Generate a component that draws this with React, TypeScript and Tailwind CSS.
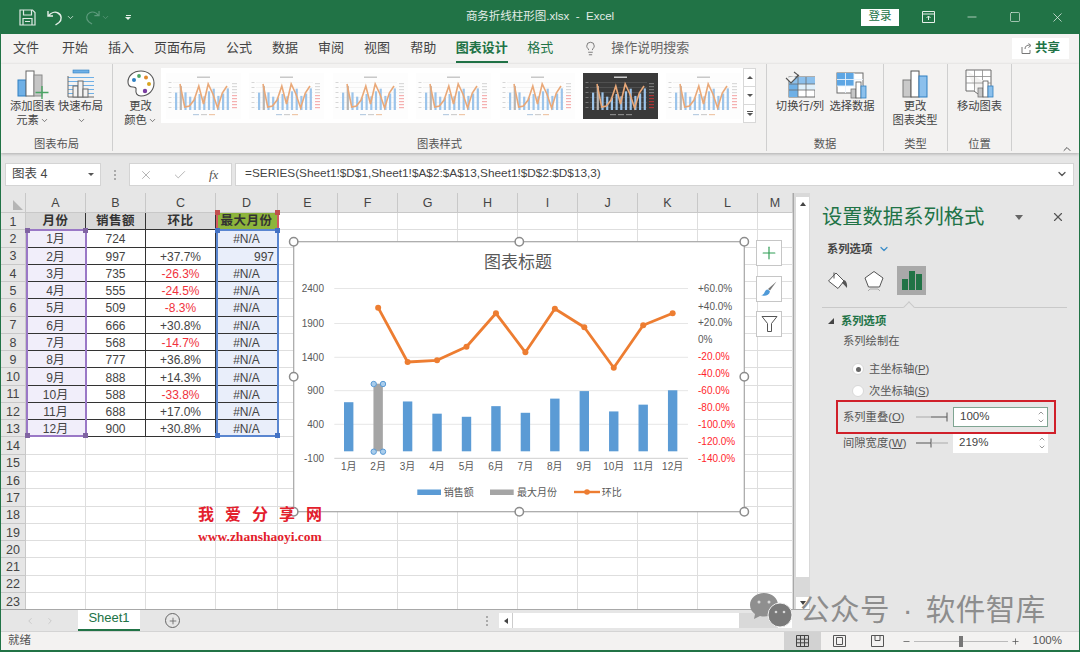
import React from 'react';
import { X, Minus, Square, Plus, ChevronDown, ChevronUp, Lightbulb, Check, ChevronLeft, ChevronRight } from 'lucide-react';

const tabs = ['开始', '插入', '页面布局', '公式', '数据', '审阅', '视图', '帮助'];
const columns = ['A', 'B', 'C', 'D', 'E', 'F', 'G', 'H', 'I', 'J', 'K', 'L', 'M'];

const sales = [724, 997, 735, 555, 509, 666, 568, 777, 888, 588, 688, 900];
const ratio = ['', '+37.7%', '-26.3%', '-24.5%', '-8.3%', '+30.8%', '-14.7%', '+36.8%', '+14.3%', '-33.8%', '+17.0%', '+30.8%'];
const months = ['1月', '2月', '3月', '4月', '5月', '6月', '7月', '8月', '9月', '10月', '11月', '12月'];
const lineY = [77.7, 132, 130.3, 116.7, 83.3, 122.3, 78.7, 97.3, 137.7, 95.3, 83.3];

const SaveIcon = () => (
  <svg width="17" height="17" viewBox="0 0 17 17" fill="none" stroke="#dfeae4" strokeWidth="1.2">
    <path d="M1 1h12.5L16 3.5V16H1z" />
    <path d="M4.5 1v5h8V1M4 16v-6.5h9V16M6 12.5h5" />
  </svg>
);

const UndoIcon = ({ color }: { color: string }) => (
  <svg width="17" height="17" viewBox="0 0 17 17" fill="none" stroke={color} strokeWidth="1.4">
    <path d="M1 2v5h5M1.5 7C4 3.5 8 2.5 11 4c4 2 4 7 1 9.5L8.5 16" />
  </svg>
);

const RedoIcon = () => (
  <svg width="16" height="16" viewBox="0 0 17 17" fill="none" stroke="#5d9a7c" strokeWidth="1.3">
    <path d="M16 2v5h-5M15.5 7C13 3.5 9 2.5 6 4c-4 2-4 7-1 9.5L8.5 16" />
  </svg>
);

const AddChartIcon = () => (
  <svg width="36" height="30" viewBox="0 0 36 30">
    <rect x="3" y="11" width="8" height="16" fill="#6fb0e6" stroke="#2f7fc1" />
    <rect x="11" y="2" width="8" height="25" fill="#fff" stroke="#666" />
    <rect x="19" y="6" width="8" height="21" fill="#c6c6c6" stroke="#8a8a8a" />
    <path d="M27 17v13M20.5 23.5h13" stroke="#4aa564" strokeWidth="1.4" />
  </svg>
);

const QuickLayoutIcon = () => (
  <svg width="28" height="30" viewBox="0 0 28 30" fill="none">
    <rect x="6" y="1" width="16" height="3" fill="#6fb0e6" stroke="#2f7fc1" strokeWidth="0.6" />
    <path d="M1 8.5h26M1 12.5h26M1 16.5h26M1 20.5h26M1 24.5h26" stroke="#6fb0e6" />
    <path d="M1 7v21h26" stroke="#6b6b6b" />
    <rect x="6" y="17" width="5" height="11" fill="#f3f2f1" stroke="#6b6b6b" />
    <rect x="11" y="12" width="5" height="16" fill="#f3f2f1" stroke="#6b6b6b" />
    <rect x="16" y="20" width="5" height="8" fill="#f3f2f1" stroke="#6b6b6b" />
  </svg>
);

const PaletteIcon = () => (
  <svg width="28" height="30" viewBox="0 0 28 30" fill="#fff">
    <path d="M14 2C6 2 1 7 1 13c0 4 3 5 5 5 2.5 0 3.5 1 3 3-.6 3 1 6 5 6 8 0 13-6 13-13S21 2 14 2z" stroke="#555" strokeWidth="1.1" />
    <circle cx="7" cy="11" r="2" fill="#2f7fc1" />
    <circle cx="12" cy="7" r="1.9" fill="#4aa564" />
    <circle cx="19" cy="8.5" r="2" fill="#e08a2c" />
    <circle cx="22" cy="15" r="2" fill="#d9a520" />
    <circle cx="18" cy="22" r="2.2" fill="#7a3fa0" />
  </svg>
);

const SwitchIcon = () => (
  <svg width="30" height="30" viewBox="0 0 30 30" fill="none">
    <rect x="4" y="8" width="26" height="20" fill="#fff" stroke="#6b6b6b" />
    <rect x="4" y="8" width="26" height="7" fill="#8cc0ec" />
    <rect x="13" y="15" width="17" height="6" fill="#dff0fb" />
    <rect x="4" y="15" width="9" height="13" fill="#6fb0e6" />
    <path d="M13 8v20M21 8v20M4 15h26M4 21h26" stroke="#6b6b6b" strokeWidth="0.8" />
    <path d="M1 9l5 5 8-8M9 3l4 3-3 4" stroke="#555" strokeWidth="1.1" fill="#f3f2f1" />
  </svg>
);

const SelectDataIcon = () => (
  <svg width="32" height="30" viewBox="0 0 32 30" fill="none">
    <rect x="1" y="4" width="26" height="20" fill="#fff" stroke="#6b6b6b" />
    <rect x="1" y="4" width="17" height="13" fill="#5da6e4" />
    <path d="M9.5 4v20M18 4v20M1 10.5h26M1 17h26" stroke="#e9f2fa" strokeWidth="0.9" />
    <rect x="15" y="20" width="5" height="9" fill="#c6c6c6" stroke="#777" strokeWidth="0.8" />
    <rect x="20" y="13" width="5" height="16" fill="#fff" stroke="#555" strokeWidth="0.8" />
    <rect x="25" y="17" width="5" height="12" fill="#8cc0ec" stroke="#2f7fc1" strokeWidth="0.8" />
  </svg>
);

const ChangeTypeIcon = () => (
  <svg width="26" height="30" viewBox="0 0 26 30">
    <rect x="1" y="11" width="8" height="17" fill="#c9c9c9" stroke="#7a7a7a" />
    <rect x="9" y="2" width="8" height="26" fill="#fff" stroke="#555" />
    <rect x="17" y="7" width="8" height="21" fill="#8cc0ec" stroke="#2f7fc1" />
  </svg>
);

const MoveChartIcon = () => (
  <svg width="30" height="30" viewBox="0 0 30 30" fill="none">
    <path d="M1 1h25v17M1 1v21h8l4 3" stroke="#6b6b6b" fill="#fff" />
    <path d="M9.5 1v21M17.5 1v10M1 7.5h25M1 14h25" stroke="#8a8a8a" strokeWidth="0.8" />
    <rect x="13" y="19" width="5" height="9" fill="#c6c6c6" stroke="#777" strokeWidth="0.8" />
    <rect x="18" y="12" width="5" height="16" fill="#fff" stroke="#555" strokeWidth="0.8" />
    <rect x="23" y="17" width="5" height="11" fill="#8cc0ec" stroke="#2f7fc1" strokeWidth="0.8" />
  </svg>
);

const MiniChart = ({ dark }: { dark?: boolean }) => {
  const pts = [11, 34, 33, 27, 13, 31, 11, 21, 35, 20, 13];
  const ticks = [10, 13, 16, 19, 22, 25, 28, 31, 34];
  return (
    <svg width="75" height="46" viewBox="0 0 75 46" className="shrink-0">
      <rect width="75" height="46" fill={dark ? '#3a3a3a' : '#fdfdfd'} />
      <rect x="31" y="3.5" width="13" height="1.5" fill={dark ? '#ccc' : '#c8c8c8'} />
      {[9, 14, 19, 24, 29, 34].map((y) => (
        <rect key={y} x="7" y={y} width="57" height="0.5" fill={dark ? '#666' : '#e8e8e8'} />
      ))}
      {[9, 14, 19, 24, 29, 34].map((y) => (
        <rect key={y} x="2.5" y={y} width="3" height="1" fill={dark ? '#777' : '#d6d6d6'} />
      ))}
      {sales.map((v, i) => (
        <rect key={i} x={9 + i * 4.7} y={37 - v * 0.024} width="2.2" height={v * 0.024} fill={i === 1 ? '#b5b5b5' : '#9cc4ea'} />
      ))}
      <polyline
        points={pts.map((y, i) => `${14 + i * 4.7},${y}`).join(' ')}
        fill="none"
        stroke="#e9a878"
        strokeWidth="1.6"
      />
      {ticks.map((y, i) => (
        <rect key={y} x="66" y={y} width="5" height="1.2" fill={i > 3 ? (dark ? '#a33' : '#f5b0b0') : dark ? '#777' : '#dadada'} />
      ))}
      <rect x="27" y="41" width="6" height="1.2" fill={dark ? '#888' : '#b8cde2'} />
      <rect x="35" y="41" width="6" height="1.2" fill={dark ? '#888' : '#cfcfcf'} />
      <rect x="43" y="41" width="6" height="1.2" fill={dark ? '#888' : '#efc7a8'} />
    </svg>
  );
};

const RibbonBtn = ({ icon, lines, width, arrow }: { icon: React.ReactNode; lines: string[]; width: string; arrow?: boolean }) => (
  <div className={`flex flex-col items-center pt-[5px] text-[11.3px] leading-[14px] text-[#444] ${width}`}>
    <div className="flex h-[30px] items-end justify-center">{icon}</div>
    {lines.map((l, i) => (
      <div key={i} className="flex h-[14px] items-center whitespace-nowrap">
        {l}
        {arrow && i === lines.length - 1 && <ChevronDown size={9} className="ml-[1px] text-[#555]" />}
      </div>
    ))}
  </div>
);

const RibbonGroup = ({ label, width, children }: { label: string; width: string; children: React.ReactNode }) => (
  <div className={`flex h-[87px] shrink-0 flex-col border-r border-[#cfcfcf] ${width}`}>
    <div className="flex flex-1">{children}</div>
    <div className="text-center text-[11.3px] leading-[14px] text-[#555]">{label}</div>
  </div>
);

const ColHeader = ({ name }: { name: string }) => (
  <div className="flex items-center justify-center border-r border-b border-[#c8c8c8] bg-[#e6e6e6] pt-[2px] text-[12.5px] text-[#444]">{name}</div>
);

const RowHeader = ({ n }: { n: number }) => (
  <div className="flex items-center justify-center border-r border-b border-[#c8c8c8] bg-[#e6e6e6] pt-[2px] text-[12.5px] text-[#444]">{n}</div>
);

const Blank = () => <div className="border-r border-b border-[#dedede] bg-white" />;

const dataCell = 'flex items-center justify-center border-r border-b border-[#333] pt-[2px] text-[12px] text-[#444] whitespace-nowrap';
const headCell = 'flex items-center justify-center border-r border-b border-[#333] pt-[1px] text-[12.5px] font-bold tracking-[0.5px] text-[#333]';

// little squares on the corners of a highlighted range
const RangeBox = ({ box, border, dot }: { box: string; border: string; dot: string }) => (
  <div className={`pointer-events-none absolute border-2 ${box} ${border}`}>
    <div className={`absolute top-[-3px] left-[-3px] h-[5px] w-[5px] ${dot}`} />
    <div className={`absolute top-[-3px] right-[-3px] h-[5px] w-[5px] ${dot}`} />
    <div className={`absolute bottom-[-3px] left-[-3px] h-[5px] w-[5px] ${dot}`} />
    <div className={`absolute right-[-3px] bottom-[-3px] h-[5px] w-[5px] ${dot}`} />
  </div>
);

const Sheet = () => (
  <div className="relative h-[416px] w-[792px] shrink-0 overflow-hidden bg-white">
    <div className="grid grid-cols-[25px_60px_60px_70px_62px_60px_60px_60px_60px_60px_60px_60px_60px_35px] grid-rows-[20px] auto-rows-[17.28px]">
      <div className="relative border-r border-b border-[#c8c8c8] bg-[#e6e6e6]">
        <div className="absolute right-[2px] bottom-[2px] h-0 w-0 border-t-[10px] border-l-[10px] border-t-transparent border-l-[#b5b5b5]" />
      </div>
      {columns.map((c) => (
        <ColHeader key={c} name={c} />
      ))}

      <RowHeader n={1} />
      <div className={`${headCell} bg-[#d9d9d9]`}>月份</div>
      <div className={`${headCell} bg-[#d9d9d9]`}>销售额</div>
      <div className={`${headCell} bg-[#d9d9d9]`}>环比</div>
      <div className={`${headCell} bg-[#8db53c]`}>最大月份</div>
      {columns.slice(4).map((c) => (
        <Blank key={c} />
      ))}

      {months.map((m, i) => (
        <React.Fragment key={m}>
          <RowHeader n={i + 2} />
          <div className={`${dataCell} bg-[#f1eefa]`}>{m}</div>
          <div className={dataCell}>{sales[i]}</div>
          <div className={`${dataCell} ${ratio[i].startsWith('-') ? 'text-[#f0323c]' : ''}`}>{ratio[i]}</div>
          {i === 1 ? (
            <div className={`${dataCell} justify-end bg-[#e9eefa] pr-[3px]`}>997</div>
          ) : (
            <div className={`${dataCell} bg-[#e9eefa]`}>#N/A</div>
          )}
          {columns.slice(4).map((c) => (
            <Blank key={c} />
          ))}
        </React.Fragment>
      ))}

      {Array.from({ length: 10 }, (_, i) => (
        <React.Fragment key={i}>
          <RowHeader n={i + 14} />
          {columns.map((c) => (
            <Blank key={c} />
          ))}
        </React.Fragment>
      ))}
    </div>

    {/* range highlights over the cells */}
    <RangeBox box="top-[20px] left-[215px] h-[17px] w-[63px] border-y-0" border="border-[#d2595f]" dot="bg-[#c0504d]" />
    <RangeBox box="top-[36px] left-[25px] h-[208px] w-[61px]" border="border-[#9a78c6]" dot="bg-[#8064a2]" />
    <RangeBox box="top-[36px] left-[215px] h-[208px] w-[63px]" border="border-[#5a86d0]" dot="bg-[#4472c4]" />
  </div>
);

const VScrollBar = () => (
  <div className="flex h-[416px] w-[17px] shrink-0 flex-col border-l border-[#a8a8a8] bg-[#d9d9d9] pr-[1px] pl-[2px]">
    <div className="mt-[4px] flex h-[14px] items-center justify-center bg-white">
      <div className="h-0 w-0 border-x-[3px] border-b-[4px] border-x-transparent border-b-[#444]" />
    </div>
    <div className="h-[366px] bg-white" />
    <div className="mt-[20px] flex h-[12px] items-center justify-center bg-white">
      <div className="h-0 w-0 border-x-[3px] border-t-[4px] border-x-transparent border-t-[#444]" />
    </div>
  </div>
);

const Chart = () => {
  const handles = [
    [8.7, 11.7],
    [234.3, 11.7],
    [459.3, 11.7],
    [8.7, 146.7],
    [459.3, 146.7],
    [8.7, 281.7],
    [234.3, 281.7],
    [459.3, 281.7],
  ];
  const right = ['+60.0%', '+40.0%', '+20.0%', '0%', '-20.0%', '-40.0%', '-60.0%', '-80.0%', '-100.0%', '-120.0%', '-140.0%'];
  const rightY = [58.5, 76, 92.5, 109.7, 126.5, 143.3, 160, 177.3, 194.3, 211.3, 228.3];
  const gridY = [58.5, 93.5, 127.3, 160.7, 194.3, 228.3];
  const left = ['2400', '1900', '1400', '900', '400', '-100'];
  const cx = (i: number) => 63.7 + i * 29.45;
  return (
    <svg width="500" height="290" viewBox="0 0 500 290" className="absolute top-[37px] left-[284px] font-['Liberation_Sans','Noto_Sans_CJK_SC',sans-serif]">
      <rect x="8.7" y="11.7" width="450.6" height="270" fill="#fff" stroke="#a6a6a6" strokeWidth="1.2" />
      <text x="233" y="38" textAnchor="middle" fontSize="17" fill="#595959">图表标题</text>
      {gridY.map((y, i) => (
        <g key={y}>
          <line x1="49.3" x2="403" y1={y} y2={y} stroke={i === 5 ? '#cfcfcf' : '#e6e6e6'} />
          <text x="39" y={y + 3.5} textAnchor="end" fontSize="10" fill="#595959">{left[i]}</text>
        </g>
      ))}
      {right.map((t, i) => (
        <text key={t} x="413" y={rightY[i] + 3.5} fontSize="10" fill={i > 3 ? '#ff1f2d' : '#595959'}>{t}</text>
      ))}
      {sales.map((v, i) => (
        <rect key={i} x={cx(i) - 4.7} y={221.3 - v * 0.0678} width="9.4" height={v * 0.0678} fill={i === 1 ? '#a5a5a5' : '#5b9bd5'} />
      ))}
      {months.map((m, i) => (
        <text key={m} x={cx(i)} y="240" textAnchor="middle" fontSize="10" fill="#595959">{m}</text>
      ))}
      {[[88.7, 154], [98, 154], [88.7, 221.7], [98, 221.7]].map(([x, y]) => (
        <circle key={`${x}-${y}`} cx={x} cy={y} r="2.7" fill="#a9cdec" stroke="#5b9bd5" />
      ))}
      <polyline
        points={lineY.map((y, i) => `${cx(i + 1)},${y}`).join(' ')}
        fill="none"
        stroke="#ed7d31"
        strokeWidth="2.8"
        strokeLinejoin="round"
      />
      {lineY.map((y, i) => (
        <circle key={i} cx={cx(i + 1)} cy={y} r="3" fill="#ed7d31" />
      ))}
      <rect x="132.3" y="259.5" width="23.7" height="5.5" fill="#5b9bd5" />
      <text x="158.7" y="266" fontSize="10" fill="#595959">销售额</text>
      <rect x="205" y="259.5" width="23.7" height="5.5" fill="#a5a5a5" />
      <text x="232" y="266" fontSize="10" fill="#595959">最大月份</text>
      <line x1="289" x2="315" y1="262" y2="262" stroke="#ed7d31" strokeWidth="2.4" />
      <circle cx="302" cy="262" r="2.8" fill="#ed7d31" />
      <text x="316.7" y="266" fontSize="10" fill="#595959">环比</text>
      {handles.map(([x, y]) => (
        <circle key={`${x}-${y}`} cx={x} cy={y} r="4.2" fill="#fff" stroke="#8c8c8c" strokeWidth="1.5" />
      ))}
    </svg>
  );
};

const ChartSideButton = ({ top, children }: { top: string; children: React.ReactNode }) => (
  <div className={`absolute left-[755px] flex h-[26px] w-[26px] items-center justify-center border border-[#c6c6c6] bg-white ${top}`}>{children}</div>
);

const SpinBox = ({ value, active }: { value: string; active?: boolean }) => (
  <div className={`flex h-[20px] w-[95px] items-center justify-between pr-[2px] pl-[6px] text-[11.5px] text-[#444] ${active ? 'border border-[#7fa592] bg-white' : 'bg-white'}`}>
    {value}
    <div className="flex flex-col text-[#666]">
      <ChevronUp size={8} />
      <ChevronDown size={8} />
    </div>
  </div>
);

const Radio = ({ label, checked }: { label: React.ReactNode; checked?: boolean }) => (
  <div className="flex h-[22px] items-center pl-[42px] text-[11.3px] text-[#555]">
    <div className="mr-[5px] flex h-[12px] w-[12px] items-center justify-center rounded-full border border-[#d8d8d8] bg-white">
      {checked && <div className="h-[5px] w-[5px] rounded-full bg-[#666]" />}
    </div>
    {label}
  </div>
);

const FormatPane = () => (
  <div className="relative h-[438px] flex-1 bg-[#e6e6e6]">
    <div className="flex h-[30px] items-center pt-[18px] pl-[12px]">
      <span className="text-[20.3px] leading-none whitespace-nowrap text-[#217346]">设置数据系列格式</span>
      <div className="ml-[31px] h-0 w-0 border-x-[4px] border-t-[5px] border-x-transparent border-t-[#666]" />
      <X size={14} className="ml-[28px] text-[#555]" strokeWidth={2} />
    </div>
    <div className="mt-[19px] flex h-[14px] items-center pl-[17px] text-[11.3px] font-bold text-[#444]">
      系列选项
      <ChevronDown size={12} strokeWidth={2.5} className="ml-[6px] text-[#3d8ec9]" />
    </div>
    <div className="mt-[10px] flex h-[29px] items-center pl-[17px]">
      <svg width="22" height="22" viewBox="0 0 22 22" fill="none" className="mr-[14px]">
        <path d="M1.5 11L9 3l8 8-6 7.5z" fill="#fff" stroke="#555" />
        <path d="M7 2.5v6" stroke="#555" />
        <path d="M17 10c2.5 1 3.5 4 3 8-2-2-3-4-5-5z" fill="#555" />
      </svg>
      <svg width="22" height="22" viewBox="0 0 22 22" className="mr-[12px]">
        <path d="M11 1.5l9 6.5-3.5 9h-11L2 8z" fill="#fff" stroke="#555" />
        <path d="M5 21l2-2h8l2 2" stroke="#aaa" fill="none" />
      </svg>
      <div className="flex h-[29px] w-[29px] items-end justify-center gap-[1px] bg-[#a9a9a9] pb-[5px]">
        <div className="h-[11px] w-[6px] bg-[#217346]" />
        <div className="h-[19px] w-[6px] bg-[#217346]" />
        <div className="h-[16px] w-[6px] bg-[#217346]" />
      </div>
    </div>
    <div className="relative mt-[12px] ml-[12px] h-px w-[245px] bg-[#c9c9c9]">
      <div className="absolute top-[-4px] left-[83px] h-[8px] w-[8px] rotate-45 border-t border-l border-[#c9c9c9] bg-[#e6e6e6]" />
    </div>
    <div className="mt-[5px] flex h-[16px] items-center pl-[18px]">
      <div className="mr-[7px] h-0 w-0 border-b-[6px] border-l-[6px] border-b-[#444] border-l-transparent" />
      <span className="text-[11.3px] font-bold text-[#217346]">系列选项</span>
    </div>
    <div className="mt-[4px] h-[16px] pl-[33px] text-[11.3px] leading-[16px] text-[#555]">系列绘制在</div>
    <div className="mt-[9px]">
      <Radio checked label={<span>主坐标轴(<span className="underline">P</span>)</span>} />
      <Radio label={<span>次坐标轴(<span className="underline">S</span>)</span>} />
    </div>
    <div className="mt-[5px] flex h-[20px] items-center pl-[33px] text-[11.3px] text-[#555]">
      <span className="w-[73px] whitespace-nowrap">系列重叠(<span className="underline">O</span>)</span>
      <svg width="32" height="10" viewBox="0 0 32 10" className="mr-[5px]">
        <path d="M0 5h15" stroke="#aaa" />
        <path d="M15 5h16M31 .5v9" stroke="#555" />
      </svg>
      <SpinBox value="100%" active />
    </div>
    <div className="mt-[6px] flex h-[20px] items-center pl-[33px] text-[11.3px] text-[#555]">
      <span className="w-[73px] whitespace-nowrap">间隙宽度(<span className="underline">W</span>)</span>
      <svg width="32" height="10" viewBox="0 0 32 10" className="mr-[5px]">
        <path d="M0 5h15M15 .5v9" stroke="#555" />
        <path d="M15 5h17" stroke="#aaa" />
      </svg>
      <SpinBox value="219%" />
    </div>
    {/* red annotation from the screenshot */}
    <div className="absolute top-[207px] left-[26px] h-[34px] w-[220px] border-2 border-[#d0202a]" />
  </div>
);

const App = () => (
  <div className="relative h-[652px] w-[1080px] overflow-hidden border-x border-b-2 border-[#217346] bg-[#f3f2f1] font-['Liberation_Sans','Noto_Sans_CJK_SC',sans-serif]">
    {/* title bar */}
    <div className="grid h-[34px] grid-cols-[1fr_auto_1fr] items-center bg-[#217346] text-white">
      <div className="flex items-center pl-[18px]">
        <SaveIcon />
        <div className="ml-[11px]"><UndoIcon color="#e6efe9" /></div>
        <ChevronDown size={9} className="ml-[2px] text-[#e6efe9]" />
        <div className="ml-[9px]"><RedoIcon /></div>
        <ChevronDown size={9} className="ml-[1px] text-[#5d9a7c]" />
        <div className="ml-[15px] flex flex-col items-center gap-[1px]">
          <div className="h-px w-[5px] bg-[#e6efe9]" />
          <div className="h-0 w-0 border-x-[3px] border-t-[3px] border-x-transparent border-t-[#e6efe9]" />
        </div>
      </div>
      <div className="text-[11.5px] whitespace-nowrap text-[#e3ece7]">商务折线柱形图.xlsx&nbsp; -&nbsp; Excel</div>
      <div className="flex items-center justify-end">
        <div className="mr-[7px] flex h-[17px] w-[38px] items-center justify-center bg-white text-[11.5px] text-[#217346]">登录</div>
        <div className="flex w-[44px] justify-center">
          <svg width="13" height="12" viewBox="0 0 13 12" fill="none" stroke="#e6efe9">
            <path d="M.5.5h12v11H.5zM.5 3h12M6.5 9V5M4.5 7l2-2 2 2" />
          </svg>
        </div>
        <div className="flex w-[43px] justify-center"><Minus size={14} strokeWidth={1.2} className="text-[#e6efe9]" /></div>
        <div className="flex w-[43px] justify-center"><Square size={12} strokeWidth={1.3} className="text-[#e6efe9]" /></div>
        <div className="flex w-[43px] justify-center"><X size={15} strokeWidth={1.2} className="text-[#e6efe9]" /></div>
      </div>
    </div>

    {/* tab row */}
    <div className="flex h-[30px] items-center pb-[2px] text-[13px] text-[#444]">
      <div className="pr-[13px] pl-[12px]">文件</div>
      {tabs.map((t) => (
        <div key={t} className="px-[10px] whitespace-nowrap">{t}</div>
      ))}
      <div className="relative mx-[9.5px] font-bold text-[#217346]">
        图表设计
        <div className="absolute top-[23px] left-0 h-[2px] w-full bg-[#217346]" />
      </div>
      <div className="mx-[10px] text-[#217346]">格式</div>
      <Lightbulb size={15} strokeWidth={1.2} className="ml-[20px] text-[#555]" />
      <div className="ml-[13px] whitespace-nowrap text-[#666]">操作说明搜索</div>
      <div className="ml-auto mr-[10px] flex h-[21px] w-[57px] items-center justify-center gap-[3px] bg-white">
        <svg width="11" height="11" viewBox="0 0 11 11" fill="none" stroke="#777">
          <path d="M1 4v6.5h8V7M4 6c0-3 2-4 5-4M7.5.5L10 2.5 7.5 4.5" />
        </svg>
        <span className="text-[12.5px] font-bold text-[#217346]">共享</span>
      </div>
    </div>

    {/* ribbon */}
    <div className="relative flex h-[89px] items-start shadow-[0_1px_3px_rgba(0,0,0,0.25)]">
      <RibbonGroup label="图表布局" width="w-[112px]">
        <RibbonBtn icon={<AddChartIcon />} lines={['添加图表', '元素']} width="w-[58px] pl-[5px]" arrow />
        <RibbonBtn icon={<QuickLayoutIcon />} lines={['快速布局', '']} width="w-[43px]" arrow />
      </RibbonGroup>
      <RibbonGroup label="图表样式" width="w-[654px]">
        <div className="flex">
          <RibbonBtn icon={<PaletteIcon />} lines={['更改', '颜色']} width="w-[48px] pl-[7px]" arrow />
          <div className="mt-[4px] flex h-[55px] items-start">
            <div className="flex h-[55px] w-[582px] items-center gap-[8.4px] bg-white pl-[5px]">
              <MiniChart />
              <MiniChart />
              <MiniChart />
              <MiniChart />
              <MiniChart />
              <MiniChart dark />
              <MiniChart />
            </div>
            <div className="flex h-[55px] w-[13px] flex-col border border-[#d8d8d8] bg-white">
              <div className="flex flex-1 items-center justify-center border-b border-[#d8d8d8]">
                <div className="h-0 w-0 border-x-[3px] border-b-[3px] border-x-transparent border-b-[#555]" />
              </div>
              <div className="flex flex-1 items-center justify-center border-b border-[#d8d8d8]">
                <div className="h-0 w-0 border-x-[3px] border-t-[3px] border-x-transparent border-t-[#555]" />
              </div>
              <div className="flex flex-1 flex-col items-center justify-center gap-[1px]">
                <div className="h-px w-[6px] bg-[#555]" />
                <div className="h-0 w-0 border-x-[3px] border-t-[3px] border-x-transparent border-t-[#555]" />
              </div>
            </div>
          </div>
        </div>
      </RibbonGroup>
      <RibbonGroup label="数据" width="w-[117px]">
        <RibbonBtn icon={<SwitchIcon />} lines={['切换行/列']} width="w-[66px]" />
        <RibbonBtn icon={<SelectDataIcon />} lines={['选择数据']} width="w-[38px]" />
      </RibbonGroup>
      <RibbonGroup label="类型" width="w-[64px]">
        <RibbonBtn icon={<ChangeTypeIcon />} lines={['更改', '图表类型']} width="w-[62px]" />
      </RibbonGroup>
      <RibbonGroup label="位置" width="w-[64px]">
        <RibbonBtn icon={<MoveChartIcon />} lines={['移动图表']} width="w-[63px]" />
      </RibbonGroup>
      <ChevronUp size={12} className="absolute top-[79px] right-[6px] text-[#555]" />
    </div>

    {/* formula bar */}
    <div className="flex h-[40px] items-start bg-[#e6e6e6] pt-[10px] pr-[5px] pl-[4px]">
      <div className="flex h-[23px] w-[96px] items-center justify-between border border-[#d4d4d4] bg-white pb-[1px] pr-[6px] pl-[6px] text-[12.5px] text-[#444]">
        图表 4
        <div className="h-0 w-0 border-x-[3px] border-t-[3px] border-x-transparent border-t-[#555]" />
      </div>
      <div className="mx-[12px] flex h-[23px] w-[4px] flex-col items-center justify-center gap-[2px]">
        <div className="h-[2px] w-[2px] bg-[#aaa]" />
        <div className="h-[2px] w-[2px] bg-[#aaa]" />
        <div className="h-[2px] w-[2px] bg-[#aaa]" />
      </div>
      <div className="flex h-[23px] w-[103px] items-center border border-[#d4d4d4] bg-white pl-[9px] text-[#aaa]">
        <X size={14} strokeWidth={1.5} />
        <Check size={14} strokeWidth={1.5} className="ml-[20px]" />
        <span className="ml-[22px] font-['Liberation_Serif',serif] text-[13px] text-[#555] italic">fx</span>
      </div>
      <div className="ml-[3px] flex h-[23px] flex-1 items-center justify-between border border-[#d4d4d4] bg-white pb-[1px] pr-[5px] pl-[9px] text-[11.8px] text-[#444]">
        =SERIES(Sheet1!$D$1,Sheet1!$A$2:$A$13,Sheet1!$D$2:$D$13,3)
        <ChevronDown size={12} strokeWidth={2.5} className="text-[#555]" />
      </div>
    </div>

    {/* workspace */}
    <div className="flex">
      <div className="flex w-[809px] shrink-0 flex-col">
        <div className="flex">
          <Sheet />
          <VScrollBar />
        </div>
        <div className="flex h-[22px] items-stretch border-t border-[#a8a8a8] bg-[#e6e6e6]">
          <div className="flex w-[77px] items-center justify-center gap-[10px] text-[#c4c4c4]">
            <ChevronLeft size={10} />
            <ChevronRight size={10} />
          </div>
          <div className="flex w-[62px] items-center justify-center border-b-2 border-[#217346] bg-white pb-[3px] text-[13px] text-[#217346]">Sheet1</div>
          <div className="ml-[25px] flex items-center">
            <div className="flex h-[15px] w-[15px] items-center justify-center rounded-full border border-[#666] text-[#666]">
              <Plus size={10} />
            </div>
          </div>
          <div className="ml-[306px] flex flex-col items-center justify-center gap-[2px]">
            <div className="h-[2px] w-[2px] bg-[#aaa]" />
            <div className="h-[2px] w-[2px] bg-[#aaa]" />
            <div className="h-[2px] w-[2px] bg-[#aaa]" />
          </div>
          <div className="ml-[11px] mt-[3px] flex h-[15px] w-[293px] bg-[#d9d9d9]">
            <div className="flex w-[14px] items-center justify-center border-r border-[#ccc] bg-white">
              <div className="h-0 w-0 border-y-[3px] border-r-[4px] border-y-transparent border-r-[#444]" />
            </div>
            <div className="w-[226px] bg-white" />
            <div className="ml-auto flex w-[14px] items-center justify-center bg-white">
              <div className="h-0 w-0 border-y-[3px] border-l-[4px] border-y-transparent border-l-[#444]" />
            </div>
          </div>
        </div>
      </div>
      <FormatPane />
    </div>

    {/* status bar */}
    <div className="flex h-[19px] items-center border-t border-[#d4d4d4] text-[11.5px] text-[#555]">
      <span className="pl-[7px]">就绪</span>
      <div className="ml-auto flex h-full w-[37px] items-center justify-center bg-[#d2d2d2]">
        <svg width="13" height="12" viewBox="0 0 13 12" fill="none" stroke="#444"><path d="M.5.5h12v11H.5zM.5 4.2h12M.5 7.8h12M4.5.5v11M8.5.5v11" /></svg>
      </div>
      <div className="flex w-[38px] justify-center">
        <svg width="13" height="12" viewBox="0 0 13 12" fill="none" stroke="#555"><path d="M.5.5h12v11H.5zM3.5 2.5h6v7h-6z" /></svg>
      </div>
      <div className="flex w-[37px] justify-center">
        <svg width="13" height="12" viewBox="0 0 13 12" fill="none" stroke="#555"><path d="M.5.5h12v11H.5zM4 .5v5h5v-5" /></svg>
      </div>
      <Minus size={9} className="ml-[6px] text-[#555]" />
      <div className="relative mx-[3px] h-px w-[94px] bg-[#bbb]">
        <div className="absolute top-[-5px] left-[45px] h-[11px] w-[4px] bg-[#777]" />
      </div>
      <Plus size={9} className="text-[#555]" />
      <span className="mr-[17px] ml-[13px] text-[#555]">100%</span>
    </div>

    {/* floating chart and its buttons */}
    <div className="pointer-events-none absolute top-[193px] left-0 h-[416px] w-[800px]">
      <Chart />
      <ChartSideButton top="top-[47px]"><Plus size={20} strokeWidth={1.4} className="text-[#2f9e55]" /></ChartSideButton>
      <ChartSideButton top="top-[83px]">
        <svg width="18" height="18" viewBox="0 0 18 18">
          <path d="M16.5 1.5L8 9l2 1.5z" fill="#777" />
          <path d="M8 9.5c-2.5 0-3 2-4 4-.5 1-2 1.5-3 1.5 3 1.5 8 1 9-3.500z" fill="#4f9ad8" />
        </svg>
      </ChartSideButton>
      <ChartSideButton top="top-[118px]">
        <svg width="17" height="18" viewBox="0 0 17 18" fill="none" stroke="#555">
          <path d="M1 1.5h15l-5.5 7v8h-4v-8z" />
        </svg>
      </ChartSideButton>
    </div>

    {/* site watermark */}
    <div className="pointer-events-none absolute top-[506px] left-[197px] flex gap-[11px] text-[16px] leading-[18px] font-bold text-[#e3202c]">
      <span>我</span><span>爱</span><span>分</span><span>享</span><span>网</span>
    </div>
    <div className="pointer-events-none absolute top-[529px] left-[197px] font-['Liberation_Serif',serif] text-[13.5px] leading-[16px] font-bold text-[#e3202c]">www.zhanshaoyi.com</div>

    {/* wechat watermark */}
    <div className="pointer-events-none absolute top-[591px] left-[748px] flex h-[38px] items-center">
      <svg width="44" height="36" viewBox="0 0 44 36" className="mr-[7px]">
        <path d="M15 1C7 1 1 6 1 13c0 4 2 7 5 9l-1 5 6-3c1.5.4 3 .6 4 .6 8 0 14-5 14-11.6S23 1 15 1z" fill="#8f8f8f" />
        <circle cx="31" cy="23" r="12" fill="#7a7a7a" stroke="#eee" />
        <circle cx="10" cy="10" r="1.5" fill="#d8d8d8" />
        <circle cx="20" cy="10" r="1.5" fill="#d8d8d8" />
        <circle cx="27" cy="20" r="1.3" fill="#d8d8d8" />
        <circle cx="35" cy="20" r="1.3" fill="#d8d8d8" />
      </svg>
      <span className="text-[29.5px] leading-none tracking-[0.5px] [word-spacing:4px] whitespace-nowrap text-[#8d8d8d]">公众号 · 软件智库</span>
    </div>
  </div>
);

export default App;
